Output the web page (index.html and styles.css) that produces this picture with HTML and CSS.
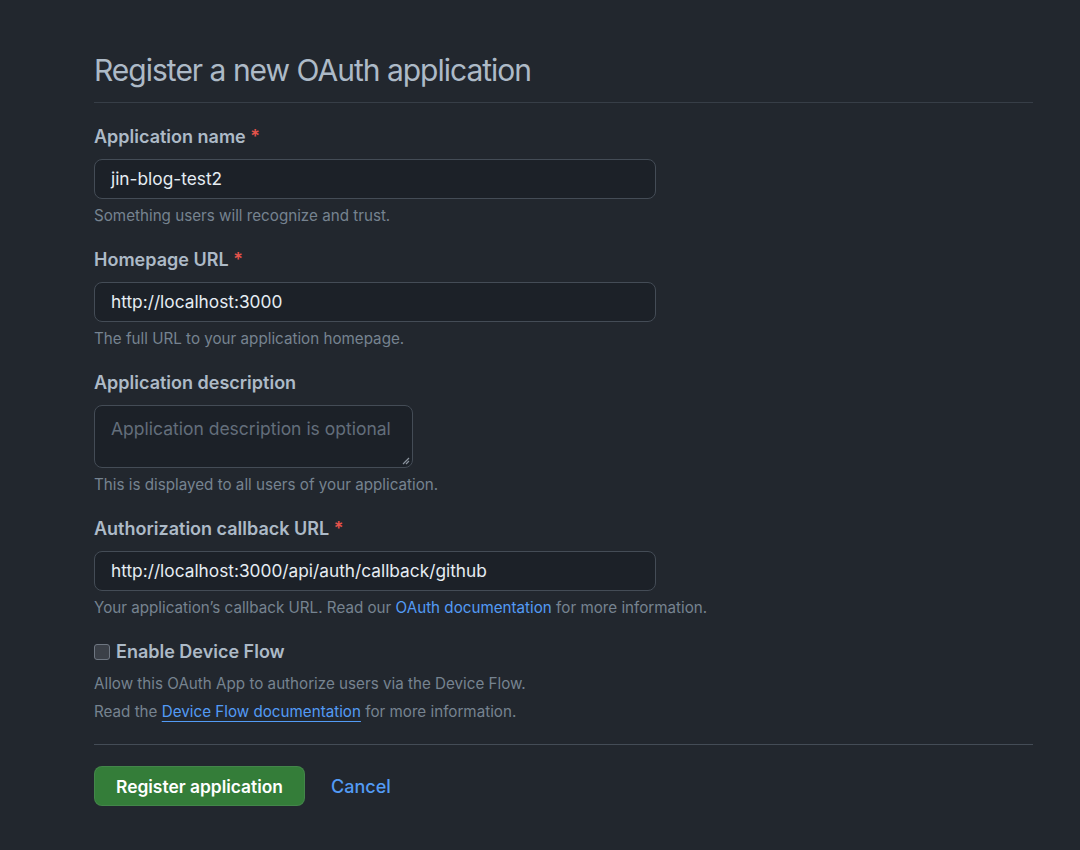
FILE: index.html
```html
<!DOCTYPE html>
<html lang="en">
<head>
<meta charset="utf-8">
<title>Register a new OAuth application</title>
<link rel="stylesheet" href="styles.css">
</head>
<body>
<main class="page">
  <h1 class="title">Register a new OAuth application</h1>
  <form class="form">
    <div class="group">
      <label class="label">Application name <span class="req">*</span></label>
      <div class="input">jin-blog-test2</div>
      <p class="note">Something users will recognize and trust.</p>
    </div>
    <div class="group">
      <label class="label">Homepage URL <span class="req">*</span></label>
      <div class="input">http://localhost:3000</div>
      <p class="note">The full URL to your application homepage.</p>
    </div>
    <div class="group">
      <label class="label">Application description</label>
      <div class="textarea"><span class="placeholder">Application description is optional</span>
        <svg class="grip" width="8" height="8" viewBox="0 0 8 8"><path d="M7 1 L1 7 M7 4 L4 7" stroke="#8b949e" stroke-width="1.2" fill="none"/></svg>
      </div>
      <p class="note">This is displayed to all users of your application.</p>
    </div>
    <div class="group">
      <label class="label">Authorization callback URL <span class="req">*</span></label>
      <div class="input">http://localhost:3000/api/auth/callback/github</div>
      <p class="note">Your application’s callback URL. Read our <a class="link">OAuth documentation</a> for more information.</p>
    </div>
    <div class="group">
      <label class="check-label"><span class="checkbox"></span>Enable Device Flow</label>
      <p class="note note-first">Allow this OAuth App to authorize users via the Device Flow.</p>
      <p class="note note-second">Read the <a class="link link-under">Device Flow documentation</a> for more information.</p>
    </div>
    <div class="actions">
      <button type="button" class="btn">Register application</button>
      <a class="cancel">Cancel</a>
    </div>
  </form>
</main>
</body>
</html>
```
FILE: styles.css
```css
* { box-sizing: border-box; }
html, body {
  margin: 0;
  background: #22272e;
  color: #adbac7;
  font-family: Inter, "Liberation Sans", sans-serif;
}
.page {
  padding: 50px 47px 0 94px;
}
.title {
  margin: 0;
  font-size: 30px;
  font-weight: 400;
  letter-spacing: -1px;
  line-height: 40px;
  color: #adbac7;
  padding-bottom: 12px;
  border-bottom: 1px solid #373e47;
}
.form {
  padding-top: 22px;
}
.group {
  margin-bottom: 22px;
}
.label, .check-label {
  display: block;
  font-size: 18px;
  font-weight: 600;
  line-height: 24px;
  color: #adbac7;
  margin-bottom: 10px;
}
.req { color: #e5534b; }
.input {
  width: 562px;
  height: 40px;
  background: #1c2128;
  border: 1px solid #444c56;
  border-radius: 8px;
  padding: 0 16px;
  font-size: 17.3px;
  line-height: 38px;
  color: #e6edf3;
}
.textarea {
  position: relative;
  width: 319px;
  height: 63px;
  background: #1c2128;
  border: 1px solid #444c56;
  border-radius: 8px;
  padding: 11px 16px 9px;
  font-size: 17.5px;
  line-height: 24px;
  white-space: nowrap;
}
.placeholder { color: #636e7b; }
.grip { position: absolute; right: 2px; bottom: 2px; }
.note {
  margin: 7px 0 0;
  font-size: 15.2px;
  line-height: 20px;
  color: #768390;
}
.note-first { margin-top: 10px; }
.note-second { margin-top: 8px; }
.link { color: #539bf5; text-decoration: none; }
.link-under { text-decoration: underline; text-underline-offset: 4px; }
.check-label {
  display: flex;
  align-items: center;
  gap: 6px;
  margin-bottom: 0;
}
.checkbox {
  width: 16px;
  height: 16px;
  border: 1px solid #6e7681;
  border-radius: 3px;
  background: #3b4048;
}
.actions {
  border-top: 1px solid #444c56;
  padding-top: 21px;
  display: flex;
  align-items: center;
  gap: 26px;
}
.btn {
  width: 211px;
  height: 40px;
  background: #347d39;
  color: #ffffff;
  border: 1px solid rgba(205,217,229,0.1);
  border-radius: 8px;
  font-family: inherit;
  font-size: 17.4px;
  font-weight: 600;
}
.cancel {
  color: #539bf5;
  font-size: 18px;
  font-weight: 500;
}
```
